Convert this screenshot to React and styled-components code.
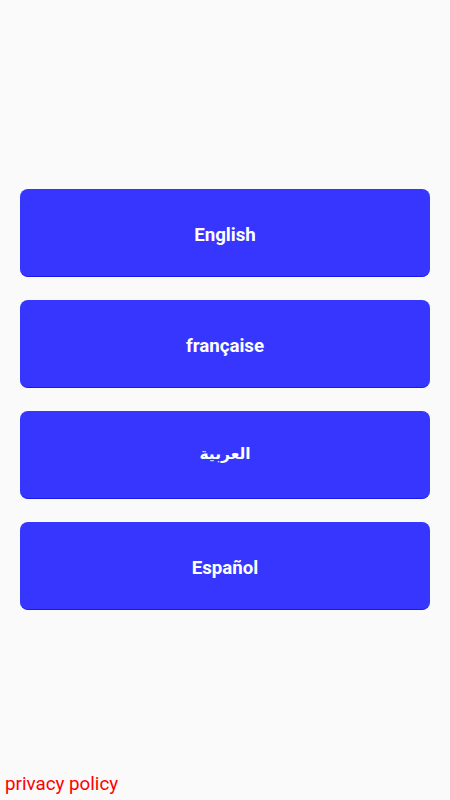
import React from 'react'
import styled, { createGlobalStyle } from 'styled-components'

const GlobalStyle = createGlobalStyle`
  html, body {
    margin: 0;
    padding: 0;
    background-color: #fafafa;
    font-family: Roboto, "Noto Sans", "DejaVu Sans", sans-serif;
  }
`

const Page = styled.div`
  width: 100vw;
  height: 100vh;
  display: grid;
  grid-template-rows: 1fr auto 1fr;
  background-color: #fafafa;
`

const ButtonList = styled.div`
  grid-row: 2;
  display: flex;
  flex-direction: column;
  gap: 23px;
  padding: 0 20px;
  margin-top: -2px;
`

const LangButton = styled.button`
  height: 88px;
  width: 100%;
  padding: ${(p) => (p.$rtl ? '0' : '5px 0 0')};
  border: none;
  border-bottom: 1px solid #1a1ae6;
  border-radius: 8px;
  background-color: #3636ff;
  color: #ffffff;
  font-family: Roboto, "DejaVu Sans", sans-serif;
  font-size: ${(p) => (p.$rtl ? '15.5px' : '18.7px')};
  font-weight: 700;
  cursor: pointer;
  box-sizing: border-box;
`

const Footer = styled.div`
  grid-row: 3;
  display: flex;
  align-items: flex-end;
  padding: 0 0 5px 5px;
`

const PrivacyLink = styled.a`
  color: #ff0000;
  font-family: Roboto, sans-serif;
  font-size: 18.8px;
  text-decoration: none;
`

const languages = [
  { label: 'English' },
  { label: 'française' },
  { label: 'العربية', rtl: true },
  { label: 'Español' },
]

export default function App() {
  return (
    <Page>
      <GlobalStyle />
      <ButtonList>
        {languages.map((l) => (
          <LangButton key={l.label} $rtl={l.rtl} dir={l.rtl ? 'rtl' : 'ltr'}>
            {l.label}
          </LangButton>
        ))}
      </ButtonList>
      <Footer>
        <PrivacyLink href="#">privacy policy</PrivacyLink>
      </Footer>
    </Page>
  )
}
